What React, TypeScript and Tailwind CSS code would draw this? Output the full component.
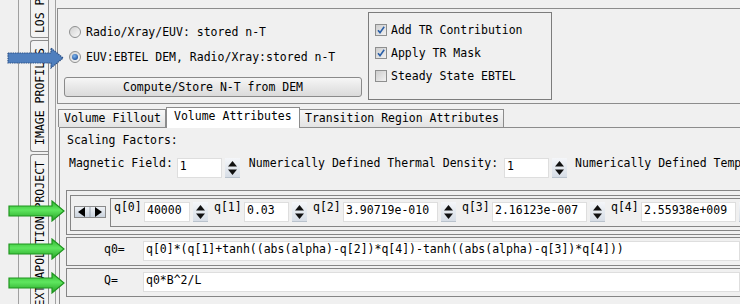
import React from "react";

const Spinner = ({ className = "" }: { className?: string }) => (
  <div className={`w-[15px] h-[20px] shrink-0 ${className}`}>
    <svg width="15" height="20" viewBox="0 0 15 20">
      <defs>
        <linearGradient id="spg" x1="0" y1="0" x2="0" y2="1">
          <stop offset="0" stopColor="#f4f6f9" />
          <stop offset="1" stopColor="#d5dce5" />
        </linearGradient>
      </defs>
      <rect x="0" y="0" width="15" height="20" fill="url(#spg)" />
      <line x1="0" y1="19.5" x2="15" y2="19.5" stroke="#b9c2cc" />
      <polygon points="3,8.5 12,8.5 7.5,3" fill="#111" />
      <polygon points="3,11.5 12,11.5 7.5,17" fill="#111" />
    </svg>
  </div>
);

const Field = ({ className, value }: { className: string; value: string }) => (
  <div
    className={`h-[20px] shrink-0 bg-white border border-[#dedede] pl-[2px] leading-[14px] whitespace-nowrap overflow-hidden ${className}`}
  >
    {value}
  </div>
);

const Radio = ({ on }: { on?: boolean }) => (
  <svg width="12" height="12" viewBox="0 0 12 12" className="shrink-0">
    <defs>
      <linearGradient id="rg" x1="0" y1="0" x2="1" y2="1">
        <stop offset="0" stopColor="#cfcfcf" />
        <stop offset="1" stopColor="#fbfbfb" />
      </linearGradient>
      <radialGradient id="rdot" cx="0.4" cy="0.35" r="0.7">
        <stop offset="0" stopColor="#7fb6ee" />
        <stop offset="1" stopColor="#1b4f9c" />
      </radialGradient>
    </defs>
    <circle cx="6" cy="6" r="5.5" fill="url(#rg)" stroke="#8e8f8f" />
    {on && <circle cx="6" cy="6" r="3" fill="url(#rdot)" />}
  </svg>
);

const Check = ({ on }: { on?: boolean }) => (
  <svg width="12" height="12" viewBox="0 0 12 12" className="shrink-0">
    <defs>
      <linearGradient id="cg" x1="0" y1="0" x2="1" y2="1">
        <stop offset="0" stopColor="#cbcbcb" />
        <stop offset="1" stopColor="#f3f3f3" />
      </linearGradient>
    </defs>
    <rect x="0.5" y="0.5" width="11" height="11" fill="url(#cg)" stroke="#8e8f8f" />
    {on && (
      <path d="M3 6.2 L5 8.6 L9.2 2.8" fill="none" stroke="#2a5fa8" strokeWidth="1.6" />
    )}
  </svg>
);

const Arrow = ({ top, left, blue }: { top: number; left: number; blue?: boolean }) => (
  <svg
    width="57"
    height="22"
    viewBox="0 0 57 22"
    className="absolute"
    style={{ top, left }}
  >
    <defs>
      <linearGradient id="gg" x1="0" y1="0" x2="0" y2="1">
        <stop offset="0" stopColor="#2fb52f" />
        <stop offset="0.45" stopColor="#5fe65f" />
        <stop offset="1" stopColor="#23a123" />
      </linearGradient>
    </defs>
    <polygon
      points="1,6 44,6 44,1 56,11 44,21 44,16 1,16"
      fill={blue ? "#4f7fbe" : "url(#gg)"}
      stroke={blue ? "#2d5288" : "#1f951f"}
      strokeWidth="1.2"
      strokeDasharray={blue ? "1.5 0.8" : undefined}
    />
  </svg>
);

const SideTab = ({
  label,
  className,
}: {
  label: string;
  className: string;
}) => (
  <div
    className={`w-[18px] shrink-0 flex flex-col items-center overflow-hidden border-l border-[#8c8c8c] bg-[#f3f3f3] ${className}`}
  >
    <span className="shrink-0 whitespace-nowrap leading-[14px] [writing-mode:vertical-rl] rotate-180">
      {label}
    </span>
  </div>
);

const QItem = ({ name, w, value }: { name: string; w: string; value: string }) => (
  <>
    <span className="w-[28px] shrink-0 mt-[1px] leading-[14px] whitespace-nowrap">{name}</span>
    <Field className={`ml-[2px] mt-[3px] ${w}`} value={value} />
    <Spinner className="ml-[3px] mt-[3px]" />
  </>
);

export default function App() {
  return (
    <div className="relative w-[740px] h-[304px] overflow-hidden bg-[#f0f0f0] flex text-[11.5px] leading-[14px] text-black font-['DejaVu_Sans_Mono','Liberation_Mono',monospace]">
      {/* vertical tab strip */}
      <div className="flex w-[55px] shrink-0 h-full">
        <div className="w-[18px] shrink-0" />
        <div className="w-px shrink-0 bg-[#a0a0a0]" />
        <div className="w-[11px] shrink-0" />
        <div className="flex flex-col gap-[2px]">
          <SideTab label="LOS PROFILES" className="h-[38px] justify-end pb-[4px] border-b rounded-bl-[3px]" />
          <SideTab label="IMAGE PROFILES" className="h-[112px] justify-center border-y rounded-l-[3px]" />
          <SideTab label="EXTRAPOLATION PROJECT" className="h-[170px] justify-start pt-[6px] border-t rounded-tl-[3px]" />
        </div>
        <div className="w-px shrink-0 bg-[#8c8c8c]" />
        <div className="w-[6px] shrink-0" />
      </div>
      <div className="w-px shrink-0 bg-[#a0a0a0]" />

      {/* main panel */}
      <div className="flex-1 flex flex-col min-w-0">
        {/* top settings group */}
        <div className="mt-[8px] ml-[1px] h-[96px] shrink-0 border border-r-0 border-[#8c8c8c] flex pl-[6px]">
          <div className="w-[298px] shrink-0 flex flex-col">
            <div className="mt-[13px] h-[20px] flex items-center gap-[5px] ml-[5px]">
              <Radio />
              <span>Radio/Xray/EUV: stored n-T</span>
            </div>
            <div className="mt-[5px] h-[20px] flex items-center gap-[5px] ml-[5px]">
              <Radio on />
              <span>EUV:EBTEL DEM, Radio/Xray:stored n-T</span>
            </div>
            <button className="mt-[10px] h-[20px] w-[298px] rounded-[3px] border border-[#8a8a8a] bg-linear-to-b from-[#f6f6f6] to-[#dadada] pb-[1px] text-center">
              Compute/Store N-T from DEM
            </button>
          </div>
          <div className="ml-[6px] mt-[3px] w-[184px] h-[88px] shrink-0 border border-[#7c7c7c] flex flex-col pt-[5px] pl-[6px]">
            <div className="h-[23px] flex items-center gap-[4px]">
              <Check on />
              <span>Add TR Contribution</span>
            </div>
            <div className="h-[23px] flex items-center gap-[4px]">
              <Check on />
              <span>Apply TR Mask</span>
            </div>
            <div className="h-[23px] flex items-center gap-[4px]">
              <Check />
              <span>Steady State EBTEL</span>
            </div>
          </div>
        </div>

        {/* tab header */}
        <div className="mt-px ml-[2px] h-[22px] shrink-0 flex items-end">
          <div className="w-[108px] h-[18px] border border-b-0 border-[#8c8c8c] bg-linear-to-b from-[#f8f8f8] to-[#e3e3e3] pl-[5px] pt-[1px] whitespace-nowrap">
            Volume Fillout
          </div>
          <div className="relative z-10 -mb-px w-[134px] h-[21px] border border-b-0 border-[#8c8c8c] bg-white pl-[7px] pt-[1px] whitespace-nowrap">
            Volume Attributes
          </div>
          <div className="w-[204px] h-[18px] border border-b-0 border-l-0 border-[#8c8c8c] bg-linear-to-b from-[#f8f8f8] to-[#e3e3e3] pl-[5px] pt-[1px] whitespace-nowrap">
            Transition Region Attributes
          </div>
        </div>

        {/* tab content */}
        <div className="ml-[3px] flex-1 border-l border-t border-[#8c8c8c] flex flex-col pl-[6px]">
          <div className="mt-[5px] ml-px whitespace-nowrap">Scaling Factors:</div>
          <div className="mt-[11px] ml-[3px] h-[20px] flex items-start whitespace-nowrap">
            <span className="-mt-[2px]">Magnetic Field:</span>
            <Field className="ml-[4px] w-[45px]" value="1" />
            <Spinner className="ml-[3px]" />
            <span className="ml-[9px] -mt-[2px]">Numerically Defined Thermal Density:</span>
            <Field className="ml-[6px] w-[45px]" value="1" />
            <Spinner className="ml-[3px]" />
            <span className="ml-[8px] -mt-[2px]">Numerically Defined Temperature:</span>
          </div>

          {/* q parameters */}
          <div className="mt-[12px] h-[45px] shrink-0 border border-r-0 border-[#858585] pt-[4px] pl-[3px] pb-[3px]">
            <div className="h-full border border-r-0 border-[#858585] flex items-start">
              <div className="ml-[3px] mt-[10px] w-[32px] h-[12px] shrink-0 border border-[#8a8a8a]">
                <svg width="30" height="10" viewBox="0 0 30 10" className="block">
                  <defs>
                    <linearGradient id="ab" x1="0" y1="0" x2="0" y2="1">
                      <stop offset="0" stopColor="#eef1f5" />
                      <stop offset="1" stopColor="#c9d2dd" />
                    </linearGradient>
                  </defs>
                  <rect width="30" height="10" fill="url(#ab)" />
                  <polygon points="3,5 10,0 10,10" fill="#000" />
                  <polygon points="27,5 20,0 20,10" fill="#000" />
                  <line x1="15" y1="0" x2="15" y2="10" stroke="#9aa4b0" />
                </svg>
              </div>
              <div className="ml-[4px] mt-[2px] h-[29px] flex-1 border border-r-0 border-[#858585] flex items-start pl-[3px] whitespace-nowrap overflow-hidden">
                <QItem name="q[0]" w="w-[46px]" value="40000" />
                <span className="w-[6px] shrink-0" />
                <QItem name="q[1]" w="w-[45px]" value="0.03" />
                <span className="w-[6px] shrink-0" />
                <QItem name="q[2]" w="w-[95px]" value="3.90719e-010" />
                <span className="w-[6px] shrink-0" />
                <QItem name="q[3]" w="w-[95px]" value="2.16123e-007" />
                <span className="w-[6px] shrink-0" />
                <QItem name="q[4]" w="w-[95px]" value="2.55938e+009" />
              </div>
            </div>
          </div>

          {/* q0 expression */}
          <div className="mt-[2px] h-[29px] shrink-0 border border-r-0 border-[#858585] flex items-start pl-[37px]">
            <span className="w-[39px] shrink-0 mt-[4px]">q0=</span>
            <Field
              className="mt-[3px] flex-1"
              value="q[0]*(q[1]+tanh((abs(alpha)-q[2])*q[4])-tanh((abs(alpha)-q[3])*q[4]))"
            />
          </div>

          {/* Q expression */}
          <div className="mt-[2px] h-[29px] shrink-0 border border-r-0 border-[#858585] flex items-start pl-[37px]">
            <span className="w-[39px] shrink-0 mt-[4px]">Q=</span>
            <Field className="mt-[3px] flex-1" value="q0*B^2/L" />
          </div>
        </div>
      </div>

      {/* annotation arrows */}
      <Arrow blue top={47} left={7} />
      <Arrow top={200} left={8} />
      <Arrow top={238} left={8} />
      <Arrow top={272} left={8} />
    </div>
  );
}
